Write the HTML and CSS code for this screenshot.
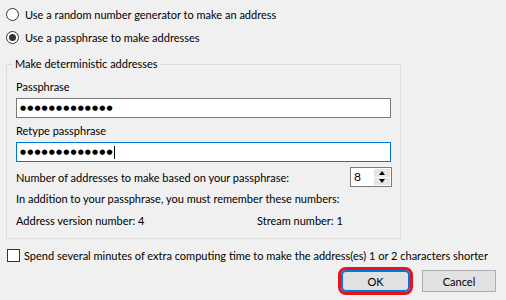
FILE: index.html
```html
<!DOCTYPE html>
<html lang="en">
<head>
  <meta charset="UTF-8" />
  <title>New deterministic addresses</title>
  <link rel="stylesheet" href="styles.css">
</head>
<body>

  <div class="dialog">
    <div class="options">
      <label class="radio-row">
        <span class="radio"></span>
        <span>Use a random number generator to make an address</span>
      </label>
      <label class="radio-row">
        <span class="radio checked"></span>
        <span>Use a passphrase to make addresses</span>
      </label>
    </div>

    <fieldset class="group">
      <legend>Make deterministic addresses</legend>

      <div class="field-label first">Passphrase</div>
      <div class="textbox"><span class="dots">●●●●●●●●●●●●●</span></div>

      <div class="field-label">Retype passphrase</div>
      <div class="textbox focused"><span class="dots">●●●●●●●●●●●●●</span><span class="caret"></span></div>

      <div class="number-row">
        <span>Number of addresses to make based on your passphrase:</span>
        <div class="spinbox">
          <span class="spin-value">8</span>
          <div class="spin-buttons">
            <span class="spin-btn"><span class="arrow up"></span></span>
            <span class="spin-btn"><span class="arrow down"></span></span>
          </div>
        </div>
      </div>

      <div class="note">In addition to your passphrase, you must remember these numbers:</div>

      <div class="numbers-row">
        <span class="version">Address version number: 4</span>
        <span>Stream number: 1</span>
      </div>
    </fieldset>

    <label class="check-row">
      <span class="checkbox"></span>
      <span>Spend several minutes of extra computing time to make the address(es) 1 or 2 characters shorter</span>
    </label>

    <div class="buttons">
      <button class="btn default">OK</button>
      <button class="btn">Cancel</button>
    </div>
  </div>

</body>
</html>
```

FILE: styles.css
```css
body {
  margin: 0;
  background: #f0f0f0;
  font-family: 'Segoe UI', Lato, sans-serif;
  font-size: 11px;
  color: #000;
}

.dialog {
  width: 506px;
  height: 300px;
  overflow: hidden;
  white-space: nowrap;
}

.options {
  padding-top: 3px;
}

.radio-row {
  display: flex;
  align-items: center;
  gap: 6px;
  height: 23px;
  padding-left: 6px;
}

.radio {
  width: 11px;
  height: 11px;
  border: 1px solid #333;
  border-radius: 50%;
  background: #fff;
  display: flex;
  align-items: center;
  justify-content: center;
}

.radio.checked::after {
  content: '';
  width: 7px;
  height: 7px;
  border-radius: 50%;
  background: #333;
}

/* Group box */
.group {
  box-sizing: border-box;
  width: 395px;
  margin: 7px 0 0 6px;
  padding: 0 9px 9px 9px;
  border: 1px solid #dcdcdc;
  min-width: 0;
}

.group legend {
  padding: 0 2px;
  margin-left: -3px;
  line-height: 16px;
}

.field-label {
  line-height: 16px;
  margin: 5px 0 3px;
}

.field-label.first {
  margin-top: 7px;
}

.textbox {
  box-sizing: border-box;
  height: 20px;
  border: 1px solid #7a7a7a;
  background: #fff;
  display: flex;
  align-items: center;
  padding-left: 3px;
}

.textbox.focused {
  border-color: #0078d7;
}

.dots {
  font-family: 'DejaVu Sans', sans-serif;
  font-size: 7px;
  letter-spacing: 1.1px;
  line-height: 10px;
}

.caret {
  width: 1px;
  height: 13px;
  background: #000;
  margin-left: 0;
}

.number-row {
  display: flex;
  align-items: center;
  justify-content: space-between;
  margin-top: 5px;
  height: 20px;
}

.spinbox {
  box-sizing: border-box;
  width: 42px;
  height: 20px;
  margin-right: -1px;
  border: 1px solid #7a7a7a;
  background: #fff;
  display: flex;
  justify-content: space-between;
  padding: 1px;
}

.spin-value {
  padding-left: 2px;
  line-height: 16px;
  font-size: 12px;
}

.spin-buttons {
  width: 16px;
  display: flex;
  flex-direction: column;
  gap: 1px;
}

.spin-btn {
  flex: 1;
  background: #e6e6e6;
  display: flex;
  align-items: center;
  justify-content: center;
}

.arrow {
  width: 0;
  height: 0;
  border-left: 3.5px solid transparent;
  border-right: 3.5px solid transparent;
}

.arrow.up {
  border-bottom: 4px solid #000;
}

.arrow.down {
  border-top: 4px solid #000;
}

.note {
  line-height: 16px;
  margin-top: 4px;
}

.numbers-row {
  display: flex;
  line-height: 16px;
  margin-top: 6px;
}

.version {
  width: 241px;
}

/* Bottom */
.check-row {
  display: flex;
  align-items: center;
  gap: 4px;
  height: 16px;
  margin-top: 8px;
  padding-left: 7px;
}

.checkbox {
  box-sizing: border-box;
  width: 13px;
  height: 13px;
  border: 1px solid #333;
  background: #fff;
}

.buttons {
  display: flex;
  justify-content: flex-end;
  gap: 12px;
  margin-top: 7px;
  padding-right: 10px;
}

.btn {
  box-sizing: border-box;
  height: 22px;
  width: 74px;
  padding: 0;
  font: inherit;
  color: #000;
  background: #e1e1e1;
  border: 1px solid #adadad;
}

.btn.default {
  width: 69px;
  border: 2px solid #0078d7;
  outline: 3px solid #e5141c;
  outline-offset: 0;
  border-radius: 5px;
}
```
